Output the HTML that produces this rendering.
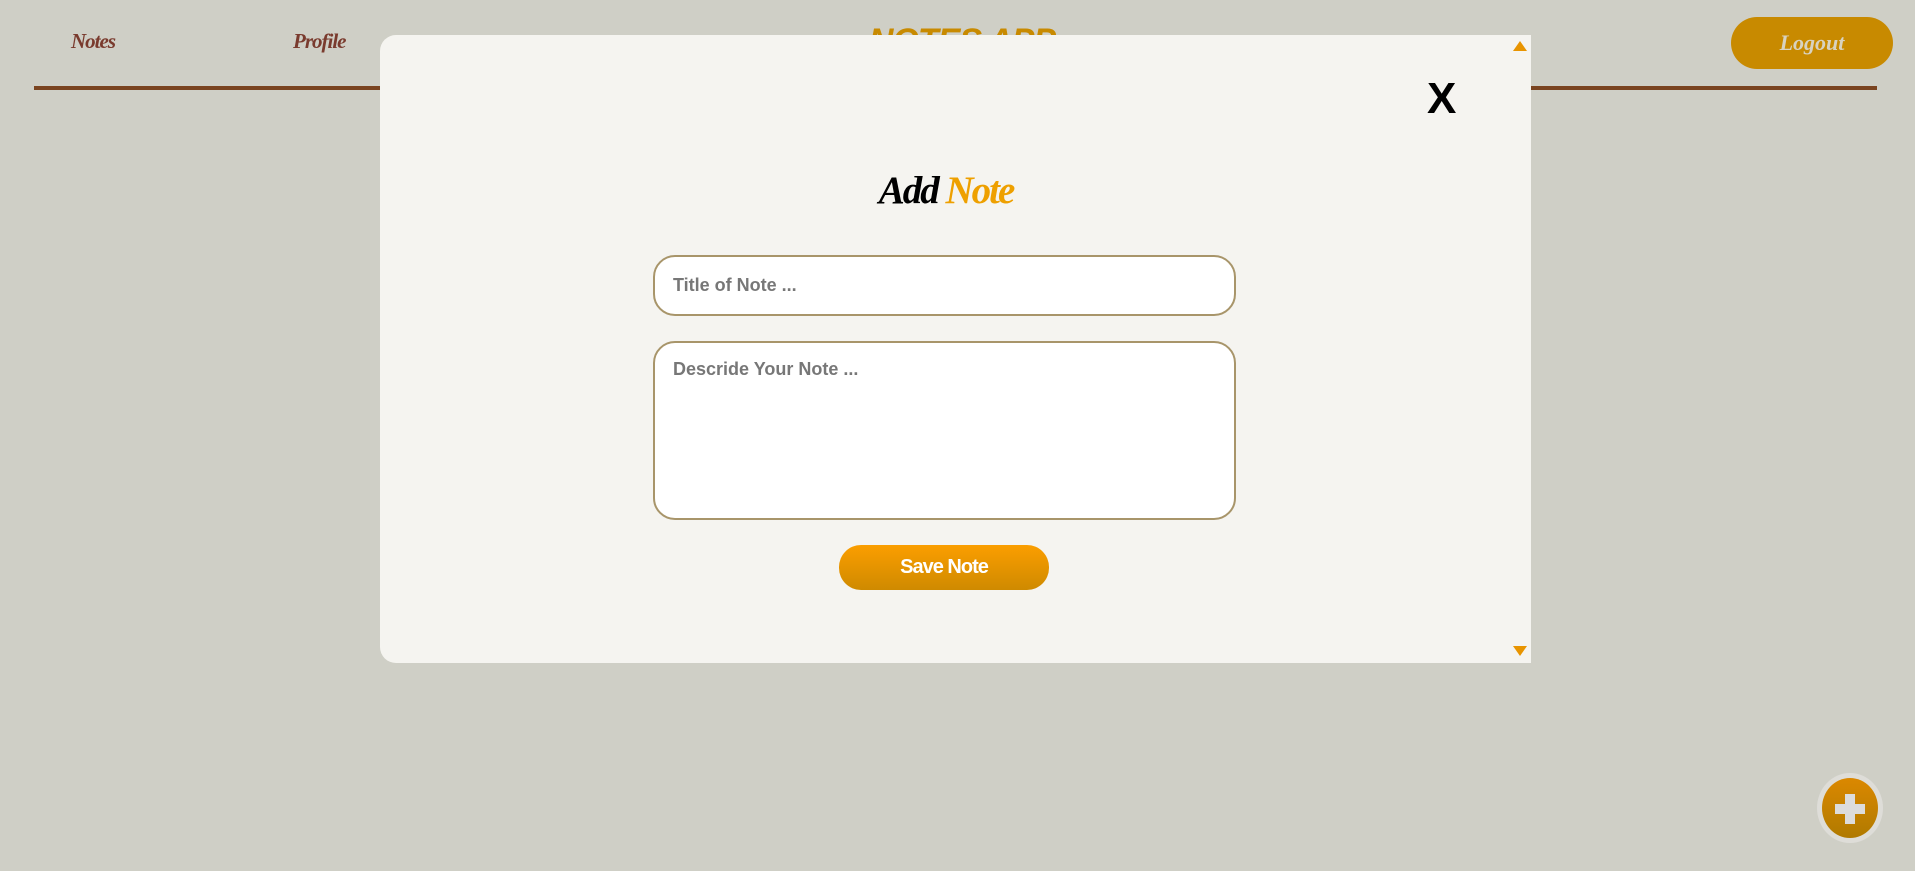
<!DOCTYPE html>
<html><head><meta charset="utf-8"><style>
*{box-sizing:border-box;margin:0;padding:0}
body{width:1915px;height:871px;background:#cfcfc6;position:relative;overflow:hidden;font-family:"Liberation Sans",sans-serif}
.nav{position:absolute;font-family:"Liberation Serif",serif;font-style:italic;font-weight:bold;color:#7a3b2e;font-size:21px;top:29px;letter-spacing:-1px}
.line{position:absolute;left:34px;width:1843px;top:86px;height:4px;background:#7a4420}
.app{position:absolute;left:862px;top:22px;width:200px;text-align:center;font-family:"Liberation Sans",sans-serif;font-style:italic;font-weight:bold;color:#c88a00;font-size:34px;letter-spacing:-1px}
.logout{position:absolute;left:1731px;top:17px;width:162px;height:52px;border-radius:26px;background:#c88a00;color:#d8d2c0;font-family:"Liberation Serif",serif;font-style:italic;font-weight:bold;font-size:22px;text-align:center;line-height:52px}
.modal{position:absolute;left:380px;top:35px;width:1151px;height:628px;background:#f5f4f0;border-radius:16px 0 0 16px}
.x{position:absolute;left:1427px;top:74px;font-size:44px;font-weight:bold;color:#000}
.tri{position:absolute;left:1513px;width:0;height:0;border-left:7px solid transparent;border-right:7px solid transparent}
.h{position:absolute;left:0;width:1892px;top:168px;text-align:center;font-family:"Liberation Serif",serif;font-style:italic;font-weight:bold;font-size:39px;letter-spacing:-2px}
.inp{position:absolute;left:653px;width:583px;background:#fff;border:2px solid #a8956a;border-radius:22px;color:#777;font-weight:bold;font-size:18px;padding-left:18px}
.save{position:absolute;left:839px;top:545px;width:210px;height:45px;border-radius:22px;background:linear-gradient(#fb9e00,#cf8a00);color:#fff;font-weight:bold;font-size:20px;text-align:center;line-height:45px;letter-spacing:-1px}
.fab{position:absolute;left:1817px;top:773px;width:66px;height:70px;border-radius:50%;background:#deddd8;padding:5px}
.fab div{width:100%;height:100%;border-radius:50%;background:linear-gradient(#db8800,#b07a00);position:relative}
.fab div:before{content:"";position:absolute;left:13px;top:26px;width:30px;height:10px;background:#dcdcdc}
.fab div:after{content:"";position:absolute;left:23px;top:16px;width:10px;height:30px;background:#dcdcdc}
</style></head><body>
<div class="nav" style="left:71px">Notes</div>
<div class="nav" style="left:293px">Profile</div>
<div class="app">NOTES APP</div>
<div class="line"></div>
<div class="logout">Logout</div>
<div class="modal"></div>
<div class="tri" style="top:41px;border-bottom:10px solid #e89400"></div>
<div class="tri" style="top:646px;border-top:10px solid #e89400"></div>
<div class="x">X</div>
<div class="h"><span style="color:#000">Add </span><span style="color:#eea000">Note</span></div>
<div class="inp" style="top:255px;height:61px;line-height:57px">Title of Note ...</div>
<div class="inp" style="top:341px;height:179px;padding-top:16px">Descride Your Note ...</div>
<div class="save">Save Note</div>
<div class="fab"><div></div></div>
</body></html>
